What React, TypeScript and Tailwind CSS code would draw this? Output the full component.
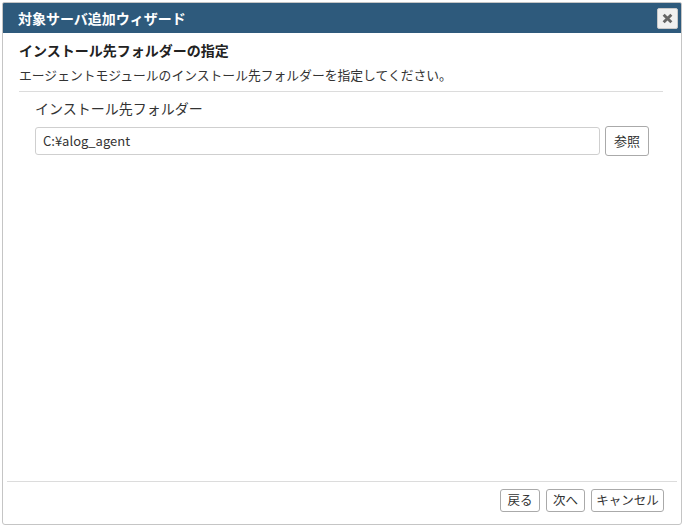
import React from "react";

export default function App() {
  const font = { fontFamily: '"Noto Sans CJK JP", "Noto Sans", sans-serif' };
  return (
    <div className="w-[686px] h-[528px] bg-white p-[2px] pr-[4px] pb-[3px]" style={font}>
      <div className="flex flex-col h-full border border-[#c5c5c5] rounded-b-[3px] rounded-t-[2px] overflow-hidden">
        <div className="h-[30px] bg-[#2e5a7c] flex items-center justify-between pl-[15px] pr-[3px] shrink-0">
          <span className="text-white font-bold text-[14px] leading-none">対象サーバ追加ウィザード</span>
          <button className="w-[21px] h-[21px] bg-[#f0f0f0] border border-[#c8c8c8] rounded-[2px] flex items-center justify-center">
            <svg width="11" height="11" viewBox="0 0 10 10">
              <path d="M1.5 1.5 L8.5 8.5 M8.5 1.5 L1.5 8.5" stroke="#666" strokeWidth="2.6" strokeLinecap="butt" />
            </svg>
          </button>
        </div>
        <div className="flex-1 flex flex-col px-[16px]">
          <div className="pt-[8px] text-[14px] font-bold text-[#222] leading-[18px]">インストール先フォルダーの指定</div>
          <div className="pt-[7px] text-[12.8px] text-[#333] leading-[18px]">エージェントモジュールのインストール先フォルダーを指定してください。</div>
          <div className="mt-[7px] border-t border-[#dcdcdc] mr-[2px]" />
          <div className="pl-[16px] pr-[16px]">
            <div className="pt-[6px] text-[14px] text-[#333] leading-[20px]">インストール先フォルダー</div>
            <div className="flex items-center gap-[5px] mt-[8px]">
              <div className="w-[565px] h-[28px] border border-[#cfcfcf] rounded-[3px] flex items-center px-[7px] text-[13px] text-[#333]">
                C:¥alog_agent
              </div>
              <button className="w-[44px] h-[30px] border border-[#aaaaaa] rounded-[3px] bg-white text-[13px] text-[#333] flex items-center justify-center">参照</button>
            </div>
          </div>
          <div className="flex-1" />
        </div>
        <div className="mx-[4px] border-t border-[#dcdcdc]" />
        <div className="h-[42px] flex items-start justify-end gap-[6px] pt-[7px] pr-[17px] shrink-0">
          <button className="w-[40px] h-[23px] border border-[#aaaaaa] rounded-[3px] bg-white text-[12.5px] text-[#333] flex items-center justify-center">戻る</button>
          <button className="w-[39px] h-[23px] border border-[#aaaaaa] rounded-[3px] bg-white text-[12.5px] text-[#333] flex items-center justify-center">次へ</button>
          <button className="w-[73px] h-[23px] border border-[#aaaaaa] rounded-[3px] bg-white text-[12.5px] text-[#333] flex items-center justify-center">キャンセル</button>
        </div>
      </div>
    </div>
  );
}
